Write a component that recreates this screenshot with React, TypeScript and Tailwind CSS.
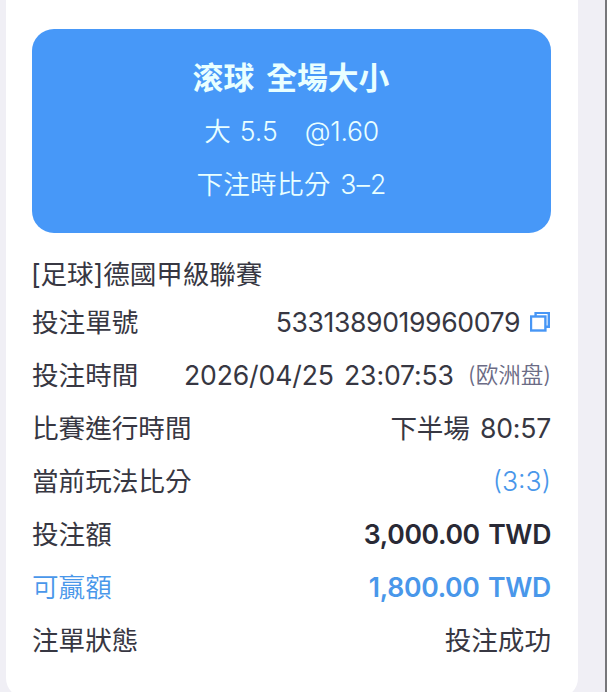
import type { ReactNode } from "react";

function Row({ label, blue, children }: { label: string; blue?: boolean; children: ReactNode }) {
  return (
    <div className={`flex h-[53px] items-center justify-between ${blue ? "text-[#4997ea]" : ""}`}>
      <span className={blue ? "font-[350]" : ""}>{label}</span>
      <span className="flex items-center">{children}</span>
    </div>
  );
}

function CopyIcon() {
  return (
    <svg className="ml-[10px] h-[21px] w-[21px]" viewBox="0 0 21 21" fill="none" stroke="#4796f5" strokeWidth="2.4">
      <path d="M5.6 4.1V0.9H18.8V14.7H15.6" />
      <rect x="1" y="4.5" width="14.4" height="14" />
    </svg>
  );
}

export default function App() {
  return (
    <div className="flex h-[692px] w-[607px] overflow-hidden border-r-2 border-[#77777a] bg-[#f0eff5] pl-[6px] font-['Inter','Noto_Sans_CJK_TC',sans-serif] text-[26.6px] leading-none whitespace-nowrap text-[#373742]">
      <main className="h-[698px] w-[572px] shrink-0 rounded-b-[20px] bg-white pt-[29px] pr-[27px] pl-[26px]">
        <section className="flex h-[204px] w-[519px] flex-col items-center rounded-[22px] bg-[#4798f8] pt-[22px] font-[350] text-[#e9ffff]">
          <h1 className="flex h-[51px] items-center gap-[12px] pr-[1px] font-['Noto_Sans_CJK_SC',sans-serif] text-[30.8px] font-bold">
            <span>滚球</span>
            <span className="font-['Noto_Sans_CJK_TC',sans-serif]">全場大小</span>
          </h1>
          <p className="mt-[3px] flex h-[53px] items-center [word-spacing:1.5px]">
            <span>大 5.5</span>
            <span className="ml-[27px] tracking-[-0.3px]">@1.60</span>
          </p>
          <p className="flex h-[53px] items-center tracking-[0.2px] [word-spacing:2px]">下注時比分 3–2</p>
        </section>
        <h2 className="-ml-px flex h-[63px] items-end pb-[8px] tracking-[-0.1px]">[足球]德國甲級聯賽</h2>
        <Row label="投注單號">
          <span className="tracking-[-0.4px]">5331389019960079</span>
          <CopyIcon />
        </Row>
        <Row label="投注時間">
          <span className="tracking-[-0.15px] [word-spacing:3px]">2026/04/25 23:07:53</span>
          <span className="ml-[14px] font-['Inter','Noto_Sans_CJK_SC',sans-serif] text-[22.5px] font-[350] text-[#6b6b85]">(欧洲盘)</span>
        </Row>
        <Row label="比賽進行時間">
          <span className="tracking-[-0.2px] [word-spacing:3px]">下半場 80:57</span>
        </Row>
        <Row label="當前玩法比分">
          <span className="font-[350] text-[#4997ea]">(3:3)</span>
        </Row>
        <Row label="投注額">
          <span className="font-semibold tracking-[-0.35px] text-[#292935] [word-spacing:2px]">3,000.00 TWD</span>
        </Row>
        <Row label="可贏額" blue>
          <span className="font-semibold tracking-[-0.3px] [word-spacing:2px]">1,800.00 TWD</span>
        </Row>
        <Row label="注單狀態">投注成功</Row>
      </main>
    </div>
  );
}
